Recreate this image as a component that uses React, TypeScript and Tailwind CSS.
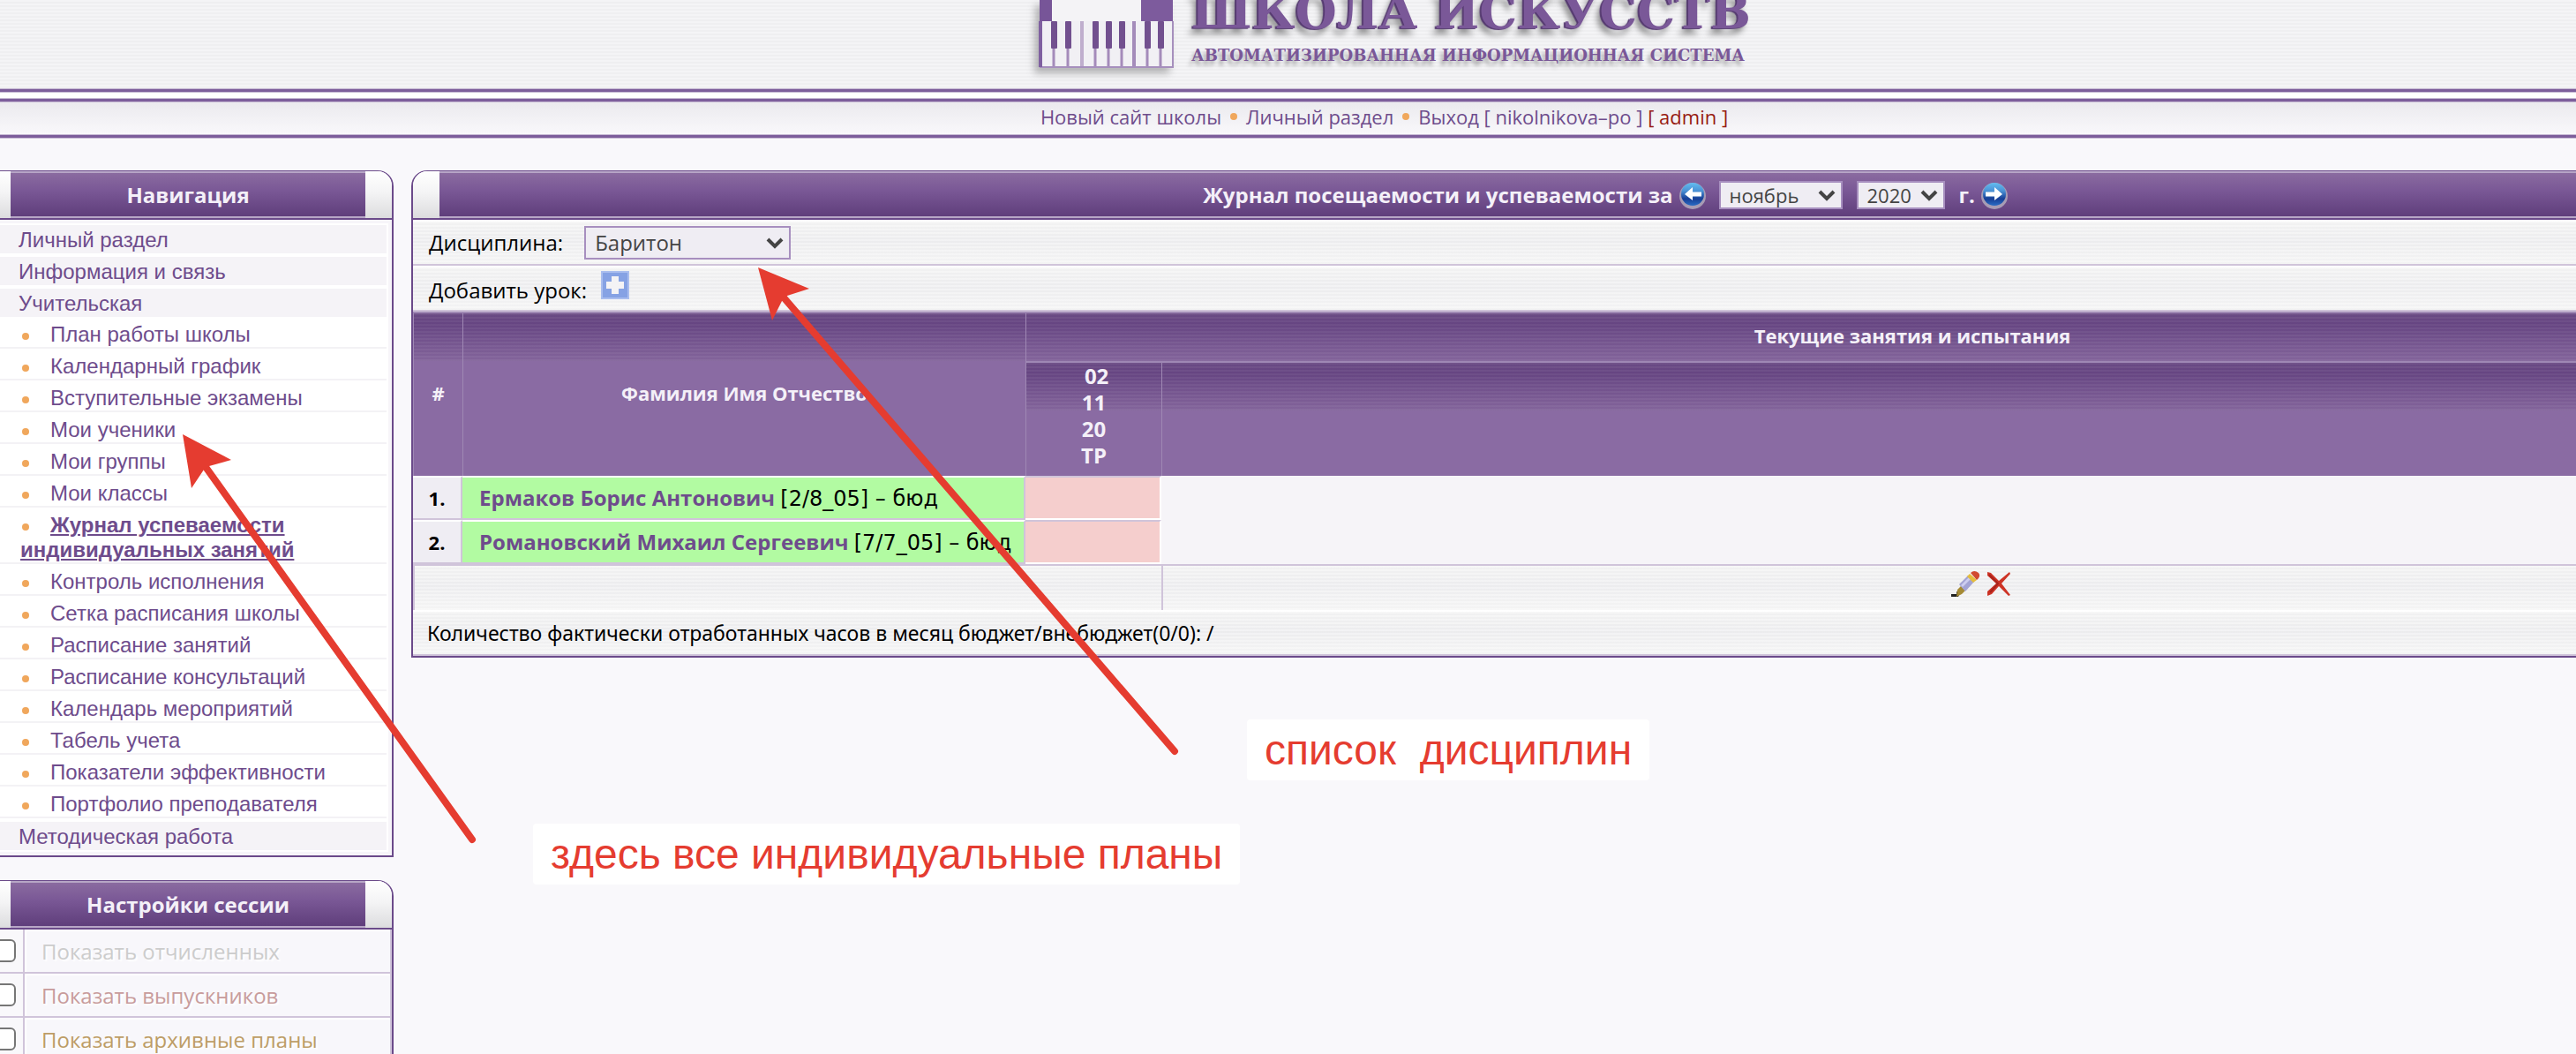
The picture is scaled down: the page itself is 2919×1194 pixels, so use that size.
import React from "react";

const categories = ["Личный раздел", "Информация и связь", "Учительская"];

const subItems = [
  "План работы школы",
  "Календарный график",
  "Вступительные экзамены",
  "Мои ученики",
  "Мои группы",
  "Мои классы",
  "Журнал успеваемости индивидуальных занятий",
  "Контроль исполнения",
  "Сетка расписания школы",
  "Расписание занятий",
  "Расписание консультаций",
  "Календарь мероприятий",
  "Табель учета",
  "Показатели эффективности",
  "Портфолио преподавателя",
];

const settings = [
  { label: "Показать отчисленных", color: "text-[#cccccc]" },
  { label: "Показать выпускников", color: "text-[#c89c9c]" },
  { label: "Показать архивные планы", color: "text-[#bd9d66]" },
];

const pupils = [
  { n: "1.", name: "Ермаков Борис Антонович", info: "[2/8_05] – бюд" },
  { n: "2.", name: "Романовский Михаил Сергеевич", info: "[7/7_05] – бюд" },
];

const stripes =
  "bg-[repeating-linear-gradient(to_bottom,rgba(255,255,255,0.35)_0_2px,transparent_2px_4px),linear-gradient(to_bottom,#f2f2f2,#ececee_45%,#f4f4f4)]";
const barFill =
  "bg-[linear-gradient(to_bottom,#8a6ba0,#7a5896_40%,#5f3e7b)]";
const headFill =
  "bg-[#8a6ba3] bg-no-repeat bg-[length:100%_54px] bg-[repeating-linear-gradient(to_bottom,rgba(255,255,255,0.05)_0_2px,transparent_2px_4px),linear-gradient(to_bottom,#6a4a84,#664582_12px,#83649b_54px)]";
const tabFill = "bg-[linear-gradient(to_bottom,#ffffff,#f4f4f5_45%,#dcdcde)]";

function PianoLogo() {
  const black = [14, 30, 61, 76, 91, 120, 135];
  const lines = [17, 33, 64, 79, 94, 123, 138];
  return (
    <svg
      className="shrink-0 [filter:drop-shadow(-5px_6px_4px_rgba(60,60,60,0.35))]"
      width="153"
      height="78"
      viewBox="0 0 153 78"
      aria-hidden="true"
    >
      <path d="M15 0H116V24H15Z" fill="#f4f3f6" />
      <rect x="1" y="0" width="14" height="24" fill="#775598" />
      <rect x="116" y="0" width="36" height="24" fill="#7d5b9d" />
      <rect x="1" y="24" width="151" height="52" fill="#f1f0f4" />
      <path d="M1 76H152V24" fill="none" stroke="#a68fbd" strokeWidth="2" />
      <path d="M2 24V76" stroke="#7f60a0" strokeWidth="4" />
      {lines.map((x) => (
        <path key={x} d={"M" + x + " 24V75"} stroke="#a48bba" strokeWidth="3" />
      ))}
      <path d="M49 24V75" stroke="#bfaecd" strokeWidth="4" />
      <path d="M108 24V75" stroke="#a48bba" strokeWidth="4" />
      {black.map((x) => (
        <rect key={x} x={x} y="24" width="7" height="31" rx="1" fill="#72508f" />
      ))}
    </svg>
  );
}

function RoundArrow({ right }: { right?: boolean }) {
  const id = right ? "orb-next" : "orb-prev";
  return (
    <svg width="32" height="32" viewBox="0 0 32 32" aria-hidden="true">
      <defs>
        <linearGradient id={id} x1="0" y1="0" x2="0" y2="1">
          <stop offset="0" stopColor="#63bdf0" />
          <stop offset="0.35" stopColor="#4b93d6" />
          <stop offset="0.7" stopColor="#173f96" />
          <stop offset="1" stopColor="#2a6cc4" />
        </linearGradient>
      </defs>
      <circle cx="16" cy="17" r="15" fill="#a79cb4" />
      <circle cx="16" cy="15" r="13" fill={"url(#" + id + ")"} />
      <path
        d={
          right
            ? "M6 12.500H16V7L25 15L16 22V17.500H6Z"
            : "M26 12.500H16V7L7 15L16 22V17.500H26Z"
        }
        fill="#fff"
      />
    </svg>
  );
}

function Select({
  label,
  options,
  box,
}: {
  label: string;
  options: string[];
  box: string;
}) {
  return (
    <span className="relative inline-flex">
      <select
        aria-label={label}
        className={
          "appearance-none rounded-none border-2 border-[#a78fbf] bg-[#efedf3] py-0 pl-2.5 font-normal text-[#444] " +
          box
        }
      >
        {options.map((o) => (
          <option key={o}>{o}</option>
        ))}
      </select>
      <svg
        className="pointer-events-none absolute inset-y-0 right-2 my-auto"
        width="20"
        height="14"
        viewBox="0 0 20 14"
        aria-hidden="true"
      >
        <path d="M2 3L10 11L18 3" fill="none" stroke="#444" strokeWidth="4" />
      </svg>
    </span>
  );
}

function Rule() {
  return <div className="h-[5px] border-y border-[#c6b9d3] bg-[#7d5e9b]" />;
}

function SideHeader({ title }: { title: string }) {
  return (
    <div className="flex h-[55px] overflow-hidden rounded-tr-2xl border-b-2 border-[#6b4a8a]">
      <div className={"w-[30px] " + tabFill} />
      <h2
        className={
          "flex flex-1 items-center justify-center border-y-2 border-[#b7a6c6] text-2xl font-bold text-[#f4f0f8] " +
          barFill
        }
      >
        {title}
      </h2>
      <div className={"w-[30px] " + tabFill} />
    </div>
  );
}

function Sidebar() {
  return (
    <aside className="flex w-[466px] shrink-0 flex-col gap-[26px]">
      <nav className="rounded-tr-[18px] border-2 border-t border-[#6b4a8a] bg-[#f7f5f9]">
        <SideHeader title="Навигация" />
        <div className="mt-1 mr-1 mb-1 bg-white pt-0.5 pr-0.5 pb-0.5 font-['Liberation_Sans',Arial,sans-serif] text-2xl text-[#6e4c8c]">
          <ul>
            {categories.map((c, i) => (
              <li
                key={c}
                className={
                  "h-8 bg-[#f5f3f7] pt-0.5 pl-[39px] leading-[30px] " +
                  (i < 2 ? "mb-1" : "")
                }
              >
                <a href="#">{c}</a>
              </li>
            ))}
            {subItems.map((s, i) => (
              <li
                key={s}
                className="border-b-2 border-[#f3f2f5] pt-1.5 pl-[41px] leading-7"
              >
                <span className="mr-6 ml-0.5 inline-block size-2 rounded-full bg-[#f0a75c] align-middle" />
                <a href="#" className={i === 6 ? "font-bold underline" : ""}>
                  {s}
                </a>
              </li>
            ))}
            <li className="mt-1 h-8 bg-[#f5f3f7] pt-0.5 pl-[39px] leading-[30px]">
              <a href="#">Методическая работа</a>
            </li>
          </ul>
        </div>
      </nav>

      <section className="rounded-tr-[18px] border-2 border-t border-[#6b4a8a]">
        <SideHeader title="Настройки сессии" />
        {settings.map((s) => (
          <label
            key={s.label}
            className="flex h-[50px] border-r-2 border-b-2 border-[#d0c4da]"
          >
            <span className="flex w-[46px] items-center border-r-2 border-[#d0c4da] pl-2.5">
              <input
                type="checkbox"
                className="size-[26px] appearance-none rounded-md border-2 border-[#767676] bg-white"
              />
            </span>
            <span
              className={
                "flex flex-1 items-center border-t-2 border-l-2 border-white bg-[#f8f7fb] pl-[17px] text-2xl leading-8 [text-shadow:2px_2px_2px_#fff] " +
                s.color
              }
            >
              {s.label}
            </span>
          </label>
        ))}
      </section>
    </aside>
  );
}

function Journal() {
  const head = "border-t-2 border-l border-[#9f88b4] pb-1 text-[22px] " + headFill;
  return (
    <main className="min-w-0 flex-1 self-start rounded-t-[18px] border-2 border-t border-[#6b4a8a]">
      <header className="flex h-[55px] overflow-hidden rounded-t-2xl border-b-2 border-[#6b4a8a]">
        <div className={"w-[30px] " + tabFill} />
        <div
          className={
            "flex flex-1 items-center justify-center border-y-2 border-[#b7a6c6] text-2xl font-bold text-[#f4f0f8] " +
            barFill
          }
        >
          <h1>Журнал посещаемости и успеваемости за</h1>
          <button type="button" aria-label="Предыдущий месяц" className="mr-3.5 ml-1.5">
            <RoundArrow />
          </button>
          <Select label="Месяц" options={["ноябрь"]} box="h-8 w-[140px] text-[22px] leading-7" />
          <span className="w-4" />
          <Select label="Год" options={["2020"]} box="h-8 w-[100px] text-[22px] leading-7" />
          <span className="ml-4">г.</span>
          <button type="button" aria-label="Следующий месяц" className="ml-1.5">
            <RoundArrow right />
          </button>
          <span className="w-[30px]" />
        </div>
      </header>

      <div
        className={
          "flex h-[52px] items-center border-t-2 border-b-2 border-t-white border-b-[#d0c4da] pl-[18px] text-2xl text-black " +
          stripes
        }
      >
        <span className="mr-6">Дисциплина:</span>
        <Select label="Дисциплина" options={["Баритон"]} box="h-[38px] w-[234px] text-2xl leading-8" />
      </div>
      <div
        className={
          "flex h-[52px] border-t-2 border-b-2 border-t-white border-b-[#d0c4da] pl-[18px] text-2xl text-black " +
          stripes
        }
      >
        <span className="mr-4 pt-2.5 leading-8">Добавить урок:</span>
        <button type="button" aria-label="Добавить урок" className="h-8 pt-1">
          <svg width="32" height="32" viewBox="0 0 32 32" aria-hidden="true">
            <rect width="32" height="32" fill="#a9bdee" />
            <rect x="2" y="2" width="28" height="28" fill="#86a2e4" />
            <path d="M12 6H20V12H26V20H20V26H12V20H6V12H12Z" fill="#f4f3f5" />
          </svg>
        </button>
      </div>

      <table className="w-full table-fixed border-separate border-spacing-0">
        <colgroup>
          <col className="w-[56px]" />
          <col className="w-[638px]" />
          <col className="w-[154px]" />
          <col />
        </colgroup>
        <thead className="text-[#f4f0f8]">
          <tr className="h-14">
            <th rowSpan={2} className={head}>#</th>
            <th rowSpan={2} className={head}>Фамилия Имя Отчество</th>
            <th colSpan={2} className={head}>Текущие занятия и испытания</th>
          </tr>
          <tr className="h-[130px]">
            <th
              className={
                "border-t-2 border-l border-[#9f88b4] pb-2 text-2xl leading-[30px] " +
                headFill
              }
            >
              <div>&nbsp;02</div>
              <div>11</div>
              <div>20</div>
              <div>ТР</div>
            </th>
            <th className={head} />
          </tr>
        </thead>
        <tbody>
          {pupils.map((p, i) => (
            <tr key={p.n} className="h-[50px]">
              <th className="border-t-2 border-r-2 border-b-2 border-t-white border-r-[#d0c4da] border-b-[#d0c4da] bg-[#efedf3] text-[22px] text-black">
                {p.n}
              </th>
              <td className="overflow-hidden border-t-2 border-r-2 border-b-2 border-t-white border-r-[#d0c4da] border-b-[#d0c4da] bg-[#b2fba2] pl-[19px] text-2xl whitespace-nowrap text-black">
                <a href="#" className="font-bold text-[#6e4c8c]">
                  {p.name}
                </a>{" "}
                <span className="font-['DejaVu_Sans',sans-serif]">{p.info}</span>
              </td>
              <td className="border-t-2 border-r-2 border-b-2 border-t-[#d0c4da] border-r-white border-b-white bg-[#f5cecd]" />
              {i === 0 && <td rowSpan={2} className="bg-[#f6f4f8]" />}
            </tr>
          ))}
          <tr className="h-[52px]">
            <td colSpan={3} className={"border-t-2 border-l-2 border-[#d0c4da] " + stripes} />
            <td className={"border-t-2 border-l-2 border-[#d0c4da] " + stripes}>
              <div className="flex justify-center gap-2 pb-2">
                <button type="button" aria-label="Редактировать">
                  <svg width="32" height="30" viewBox="0 0 32 30" aria-hidden="true">
                    <path d="M0 26H6V23L10 25L8 29H0Z" fill="#222" />
                    <path d="M7 21L11 17L16 22L12 26L6 29Z" fill="#a58a35" />
                    <path d="M9 15L19 5L26 12L16 23Z" fill="#a3a3d4" />
                    <path d="M11 16L20 7L22 9L13 18Z" fill="#cdcdf0" />
                    <path d="M18 6L21 3L29 10L25 13Z" fill="#e5bd3c" />
                    <path d="M22 2Q26 -2 31 2Q34 6 29 10Z" fill="#d1492f" />
                  </svg>
                </button>
                <button type="button" aria-label="Удалить">
                  <svg width="28" height="28" viewBox="0 0 28 28" aria-hidden="true">
                    <path d="M1 0L5 1L14 10L26 0L27 2L17 13L27 26L25 27L14 16L6 25L1 27L1 22L11 13L1 4Z" fill="#cd3325" />
                    <path d="M3 3L13 13L4 23" fill="none" stroke="#a8231b" strokeWidth="2" />
                  </svg>
                </button>
              </div>
            </td>
          </tr>
          <tr className="h-[52px]">
            <td
              colSpan={4}
              className={
                "border-t-2 border-b-2 border-t-white border-b-[#d0c4da] pl-4 font-['Noto_Sans',sans-serif] text-[23px] text-black " +
                stripes
              }
            >
              Количество фактически отработанных часов в месяц бюджет/внебюджет(0/0): /
            </td>
          </tr>
        </tbody>
      </table>
    </main>
  );
}

function Annotations() {
  return (
    <>
      <svg
        className="pointer-events-none absolute top-0 left-0"
        width="1400"
        height="1000"
        viewBox="0 0 1400 1000"
        aria-hidden="true"
      >
        <g stroke="#e53c30" strokeWidth="8" strokeLinecap="round">
          <path d="M233 529L535 951" />
          <path d="M888 337L1331 851" />
        </g>
        <g fill="#e53c30">
          <path d="M207 492L262 521L237 528L231 532L217 553Z" />
          <path d="M859 303L917 327L892 335L886 341L875 363Z" />
        </g>
      </svg>
      <p className="absolute top-[815px] left-[1413px] rounded bg-white px-5 font-['Liberation_Sans',Arial,sans-serif] text-5xl leading-[69px] whitespace-pre text-[#e53c30]">
        {"список  дисциплин"}
      </p>
      <p className="absolute top-[933px] left-[604px] rounded bg-white px-5 font-['Liberation_Sans',Arial,sans-serif] text-5xl leading-[69px] whitespace-pre text-[#e53c30]">
        здесь все индивидуальные планы
      </p>
    </>
  );
}

export default function App() {
  return (
    <div className="relative h-screen overflow-hidden bg-[#f9f8fb] font-['Open_Sans','Noto_Sans',sans-serif]">
      <div className="-ml-5 w-[calc(100%+274px)]">
        <div className="flex h-[100px] justify-center gap-5 overflow-hidden bg-[repeating-linear-gradient(to_bottom,#f4f4f6_0_2px,#efeff1_2px_4px)] pl-2">
          <PianoLogo />
          <div className="font-['DejaVu_Serif',serif] font-bold text-[#7a5898]">
            <div className="-mt-6 text-[54px] leading-[74px] [text-shadow:-2px_1px_1px_#553a70,-5px_7px_6px_rgba(60,60,60,0.5)]">
              ШКОЛА ИСКУССТВ
            </div>
            <div className="text-lg leading-[26px] [text-shadow:-3px_5px_4px_rgba(60,60,60,0.4)]">
              АВТОМАТИЗИРОВАННАЯ ИНФОРМАЦИОННАЯ СИСТЕМА
            </div>
          </div>
        </div>
        <Rule />
        <div className="h-[6px] bg-white" />
        <Rule />
        <nav className="flex h-9 items-center justify-center gap-2.5 bg-[linear-gradient(to_bottom,#ebeaee,#f9f8fb)] pr-4 pb-1 text-[22px] text-[#6e4c8c]">
          <a href="#">Новый сайт школы</a>
          <span className="size-2 rounded-full bg-[#f0a75c]" />
          <a href="#">Личный раздел</a>
          <span className="size-2 rounded-full bg-[#f0a75c]" />
          <span>
            <a href="#">Выход [ nikolnikova–po ]</a>{" "}
            <a href="#" className="text-[#981b12]">[ admin ]</a>
          </span>
        </nav>
        <Rule />
        <div className="mt-9 flex gap-5">
          <Sidebar />
          <Journal />
        </div>
      </div>
      <Annotations />
    </div>
  );
}
